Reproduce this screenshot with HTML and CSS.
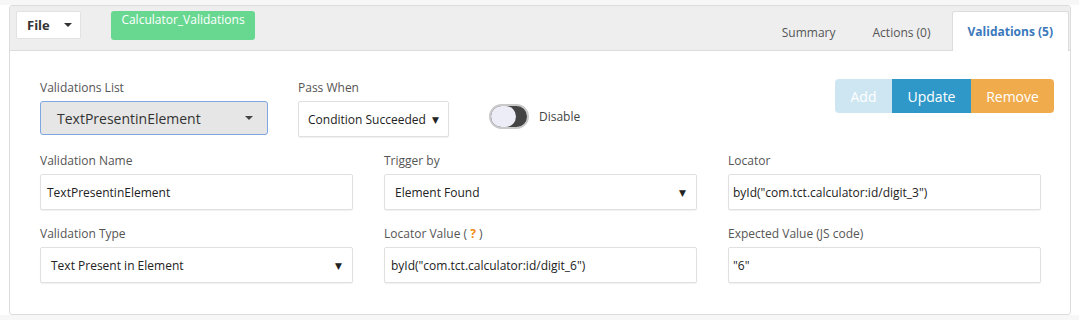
FILE: index.html
```html
<!DOCTYPE html>
<html>
<head>
<meta charset="utf-8">
<link rel="stylesheet" href="styles.css">
</head>
<body>
<div class="panel">
  <div class="header">
    <div class="file-btn">File <span class="caret"></span></div>
    <div class="badge">Calculator_Validations</div>
    <div class="tabs">
      <div class="tab">Summary</div>
      <div class="tab">Actions (0)</div>
      <div class="tab active">Validations (5)</div>
    </div>
  </div>
  <div class="content">
    <div class="row1">
      <div class="group list-group">
        <div class="label">Validations List</div>
        <div class="big-select"><span>TextPresentinElement</span><span class="caret big"></span></div>
      </div>
      <div class="group pass-group">
        <div class="label">Pass When</div>
        <div class="select pass-select"><span>Condition Succeeded</span><span class="arrow">▼</span></div>
      </div>
      <div class="toggle-wrap">
        <div class="toggle"><div class="knob"></div></div>
        <span class="toggle-label">Disable</span>
      </div>
      <div class="btn-group">
        <div class="btn add">Add</div>
        <div class="btn update">Update</div>
        <div class="btn remove">Remove</div>
      </div>
    </div>
    <div class="grid">
      <div class="group">
        <div class="label">Validation Name</div>
        <div class="input">TextPresentinElement</div>
      </div>
      <div class="group">
        <div class="label">Trigger by</div>
        <div class="select"><span>Element Found</span><span class="arrow">▼</span></div>
      </div>
      <div class="group">
        <div class="label">Locator</div>
        <div class="input c3">byId("com.tct.calculator:id/digit_3")</div>
      </div>
      <div class="group">
        <div class="label">Validation Type</div>
        <div class="select"><span>Text Present in Element</span><span class="arrow">▼</span></div>
      </div>
      <div class="group">
        <div class="label">Locator Value ( <span class="q">?</span> )</div>
        <div class="input">byId("com.tct.calculator:id/digit_6")</div>
      </div>
      <div class="group">
        <div class="label">Expected Value (JS code)</div>
        <div class="input c3">"6"</div>
      </div>
    </div>
  </div>
</div>
</body>
</html>
```

FILE: styles.css
```css
* { box-sizing: border-box; }
html, body { margin: 0; padding: 0; }
body {
  background: linear-gradient(#f7f7f7 0, #f7f7f7 5px, #ffffff 5px);
  font-family: "Open Sans", "DejaVu Sans", sans-serif;
  font-size: 12px;
  color: #333;
  padding: 5px 9px 0 9px;
}
.panel {
  width: 1062px;
  height: 310px;
  border: 1px solid #dcdcdc;
  border-radius: 3px;
  background: #fff;
  overflow: hidden;
}
.header {
  height: 45px;
  background: #eeeeee;
  border-bottom: 1px solid #dcdcdc;
  display: flex;
  align-items: flex-start;
  padding: 5px 1px 0 6px;
}
.file-btn {
  width: 65px;
  height: 28px;
  background: #fff;
  border: 1px solid #e2e2e2;
  border-radius: 2px;
  font-weight: bold;
  font-size: 13px;
  color: #333;
  display: flex;
  align-items: center;
  padding-left: 10px;
  gap: 14px;
}
.caret {
  display: inline-block;
  width: 0; height: 0;
  border-left: 4px solid transparent;
  border-right: 4px solid transparent;
  border-top: 4px solid #333;
}
.badge {
  margin-left: 30px;
  width: 144px;
  height: 29px;
  background: #68d891;
  border-radius: 3px;
  color: #fff;
  font-size: 12px;
  text-align: center;
  line-height: 16px;
  padding-top: 1px;
}
.tabs {
  margin-left: auto;
  display: flex;
  gap: 5px;
  align-self: stretch;
  align-items: flex-end;
}
.tab {
  height: 39px;
  padding: 0 15px;
  display: flex;
  align-items: center;
  color: #555;
  font-size: 12px;
  margin-bottom: -1px;
  border: 1px solid transparent;
  border-bottom: none;
}
.tab.active {
  height: 40px;
  background: #fff;
  border-color: #dcdcdc;
  border-radius: 3px 3px 0 0;
  color: #3a78bb;
  font-weight: bold;
}
.content {
  padding: 29px 30px 0 30px;
}
.row1 {
  display: flex;
  align-items: flex-start;
}
.group { display: flex; flex-direction: column; }
.label {
  font-size: 12px;
  line-height: 16px;
  color: #555;
  margin-bottom: 5px;
}
.list-group { width: 228px; }
.big-select {
  height: 34px;
  background: #e6e6e6;
  border: 1px solid #7ea6e0;
  border-radius: 3px;
  display: flex;
  align-items: center;
  justify-content: space-between;
  padding: 0 14px 0 16px;
  font-size: 14px;
  color: #333;
}
.caret.big { border-top-color: #444; }
.pass-group { width: 151px; margin-left: 30px; }
.select, .input {
  height: 36px;
  border: 1px solid #e0e0e0;
  border-radius: 2px;
  box-shadow: 0 1px 1px rgba(0,0,0,0.06);
  background: #fff;
  display: flex;
  align-items: center;
  font-size: 12px;
  color: #222;
}
.select {
  justify-content: space-between;
  padding: 0 10px 0 10px;
}
.input { padding: 0 6px; }
.input.c3 { padding-left: 4px; }
.arrow { font-size: 9px; color: #222; }
.pass-select { padding: 0 9px 0 9px; }
.toggle-wrap {
  margin-left: 40px;
  margin-top: 24px;
  display: flex;
  align-items: center;
  gap: 10px;
}
.toggle {
  width: 40px;
  height: 25px;
  border-radius: 13px;
  background: #444;
  border: 2px solid #c9c9c9;
  position: relative;
}
.knob {
  position: absolute;
  left: 0; top: 0;
  width: 25px; height: 21px;
  border-radius: 11px;
  background: #ededf8;
}
.toggle-label { font-size: 12px; color: #444; }
.btn-group {
  margin-left: auto;
  margin-right: -14px;
  margin-top: -1px;
  display: flex;
}
.btn {
  height: 34px;
  display: flex;
  align-items: center;
  justify-content: center;
  color: #fff;
  font-size: 14px;
}
.btn.add { width: 57px; background: #cde6f2; border-radius: 4px 0 0 4px; }
.btn.update { width: 79px; background: #2f98c9; }
.btn.remove { width: 83px; background: #f0ac4c; border-radius: 0 4px 4px 0; }
.grid {
  margin-top: 16px;
  display: grid;
  grid-template-columns: 313px 313px 313px;
  column-gap: 31px;
  row-gap: 16px;
}
.q { color: #f08c1a; font-weight: bold; }
```
